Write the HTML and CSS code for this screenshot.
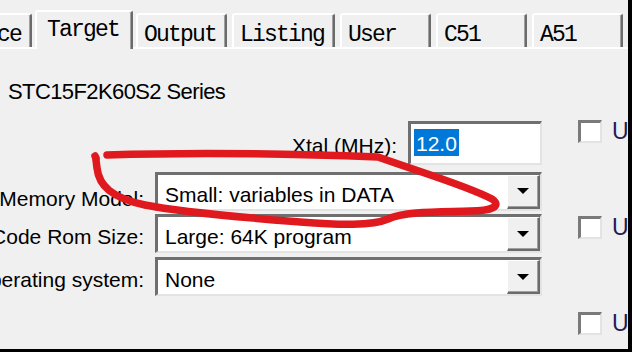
FILE: index.html
```html
<!DOCTYPE html>
<html>
<head>
  <title>Options for Target</title>
  <link rel="stylesheet" href="styles.css">
</head>
<body>
    <div class="window">
        <div class="tabs">
            <div class="tab tab-cut">Device</div>
            <div class="tab active">Target</div>
            <div class="tab">Output</div>
            <div class="tab">Listing</div>
            <div class="tab">User</div>
            <div class="tab">C51</div>
            <div class="tab">A51</div>
            <div class="tab">BL51 Locate</div>
        </div>

        <div class="panel">
            <div class="main">
                <div class="device">STC15F2K60S2 Series</div>

                <div class="xtal-row">
                    <span class="label">Xtal (MHz):</span>
                    <div class="edit"><span class="selected">12.0</span></div>
                </div>

                <div class="field-row">
                    <span class="label label-low">Memory Model:</span>
                    <div class="combo">
                        <span class="combo-text">Small: variables in DATA</span>
                        <span class="drop"><i class="arrow"></i></span>
                    </div>
                </div>
                <div class="field-row">
                    <span class="label">Code Rom Size:</span>
                    <div class="combo">
                        <span class="combo-text">Large: 64K program</span>
                        <span class="drop"><i class="arrow"></i></span>
                    </div>
                </div>
                <div class="field-row">
                    <span class="label">Operating system:</span>
                    <div class="combo">
                        <span class="combo-text">None</span>
                        <span class="drop"><i class="arrow"></i></span>
                    </div>
                </div>
            </div>

            <div class="side">
                <div class="check"><span class="box"></span><span class="check-text">Use On-chip ROM (0x0-0xEFFF)</span></div>
                <div class="check"><span class="box"></span><span class="check-text">Use On-chip XRAM (0x0-0x6FF)</span></div>
                <div class="check"><span class="box"></span><span class="check-text">Use multiple DPTR registers</span></div>
            </div>
        </div>

        <!-- hand drawn marker loop over the dialog -->
        <svg class="scribble" width="632" height="352" viewBox="0 0 632 352">
            <path d="M107 155 C200 152 300 154 378 157 C420 172 468 186 492 199 C502 206 492 211 470 211 C440 212 405 211 388 219 C372 226 340 225 300 222 C250 218 185 213 145 205 C112 198 99 186 97 168 L96 160" />
            <path d="M95 156 L96 158" />
        </svg>
    </div>
</body>
</html>
```

FILE: styles.css
```css
body {
    margin: 0;
    background-color: #f0f0f0;
    font-family: "Liberation Sans", Arial, sans-serif;
    font-size: 21px;
    color: #000;
}

.window {
    position: relative;
    width: 632px;
    height: 352px;
    box-sizing: border-box;
    border-right: 4px solid #000;
    border-bottom: 3px solid #000;
    overflow: hidden;
}

/* tab strip */
.tabs {
    display: flex;
    align-items: flex-end;
    gap: 5px;
    height: 49px;
    padding-top: 15px;
    box-sizing: border-box;
    border-bottom: 2px solid #fff;
}

.tab {
    flex-shrink: 0;
    min-width: 91px;
    height: 34px;
    box-sizing: border-box;
    padding: 9px 9px 0 6px;
    border-top: 2px solid #fff;
    border-left: 2px solid #fff;
    border-right: 2px solid #6b6b6b;
    border-radius: 3px 3px 0 0;
    box-shadow: inset -1px 0 0 #a0a0a0;
    font-family: "Liberation Mono", "Courier New", monospace;
    font-size: 23px;
    letter-spacing: -1.8px;
    line-height: 22px;
    white-space: nowrap;
}

.tab-cut {
    margin-left: -59px;
}

.tab.active {
    min-width: 98px;
    height: 39px;
    margin: 0 -2px -2px -2px;
    padding-top: 7px;
    padding-left: 10px;
    background-color: #f0f0f0;
}

/* dialog body */
.panel {
    display: flex;
    gap: 36px;
}

.main {
    width: 542px;
    flex-shrink: 0;
    display: flex;
    flex-direction: column;
}

.device {
    height: 24px;
    margin-top: 31px;
    padding-left: 8px;
    font-size: 22px;
    letter-spacing: -0.6px;
    line-height: 24px;
    white-space: nowrap;
}

.label {
    white-space: nowrap;
}

.xtal-row {
    display: flex;
    justify-content: flex-end;
    align-items: center;
    gap: 11px;
    margin-top: 17px;
    height: 44px;
}

.xtal-row .label {
    padding-top: 6px;
}

.edit {
    display: flex;
    align-items: flex-start;
    width: 134px;
    height: 44px;
    box-sizing: border-box;
    padding: 5px 0 0 3px;
    background-color: #fff;
    border-style: solid;
    border-width: 3px 2px 2px 3px;
    border-color: #6f6f6f #e3e3e3 #e3e3e3 #6f6f6f;
}

.selected {
    height: 27px;
    padding: 0 2px;
    line-height: 29px;
    background-color: #0078d7;
    color: #fff;
}

.field-row {
    display: grid;
    grid-template-columns: 144px 1fr;
    column-gap: 11px;
    align-items: center;
    margin-top: 4px;
    height: 39px;
}

.xtal-row + .field-row {
    margin-top: 6px;
}

.field-row .label {
    display: flex;
    justify-content: flex-end;
    padding-top: 6px;
}

.field-row .label-low {
    padding-top: 16px;
}

.combo {
    display: flex;
    align-items: stretch;
    height: 39px;
    box-sizing: border-box;
    background-color: #fff;
    border-style: solid;
    border-width: 3px 2px 2px 3px;
    border-color: #6f6f6f #e3e3e3 #e3e3e3 #6f6f6f;
}

.combo-text {
    flex: 1;
    padding-left: 7px;
    padding-top: 4px;
    line-height: 32px;
    white-space: nowrap;
}

.drop {
    display: flex;
    align-items: center;
    justify-content: center;
    width: 33px;
    box-sizing: border-box;
    background-color: #f0f0f0;
    border-style: solid;
    border-width: 1px 2px 2px 1px;
    border-color: #fff #6b6b6b #6b6b6b #fff;
    box-shadow: inset -1px -1px 0 #a0a0a0;
}

.arrow {
    width: 0;
    height: 0;
    border-left: 6px solid transparent;
    border-right: 6px solid transparent;
    border-top: 6px solid #000;
}

/* check boxes on the right */
.side {
    min-width: 0;
    display: flex;
    flex-direction: column;
    gap: 72px;
    padding-top: 70px;
}

.check {
    display: flex;
    align-items: center;
    gap: 10px;
    height: 24px;
    white-space: nowrap;
}

.box {
    flex-shrink: 0;
    width: 24px;
    height: 23px;
    box-sizing: border-box;
    background-color: #fff;
    border-style: solid;
    border-width: 3px 2px 2px 3px;
    border-color: #7a7a7a #e3e3e3 #e3e3e3 #7a7a7a;
}

.check-text {
    font-size: 23px;
    color: #221a55;
}

.scribble {
    position: absolute;
    top: 0;
    left: 0;
    pointer-events: none;
}

.scribble path {
    fill: none;
    stroke: #e0191f;
    stroke-width: 7.5;
    stroke-linecap: round;
    stroke-linejoin: round;
}
```
